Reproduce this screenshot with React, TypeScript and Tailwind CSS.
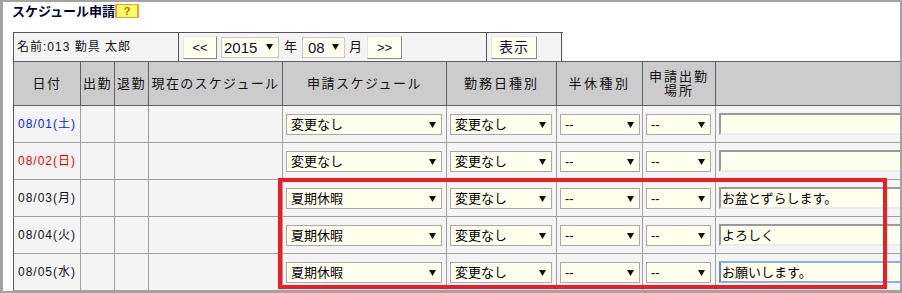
import React from "react";

function Arrow() {
  return (
    <svg width="7" height="6" viewBox="0 0 7 6" className="shrink-0">
      <polygon points="0,0 7,0 3.5,6" fill="#111" />
    </svg>
  );
}

function Sel({ w, text }: { w: string; text: string }) {
  return (
    <div
      className={`${w} inline-flex h-[21px] items-center justify-between border border-[#a9a9a9] bg-[#ffffee] pl-[4px] pr-[5px] text-[13px] leading-none text-black align-middle`}
    >
      <span className="whitespace-nowrap">{text}</span>
      <Arrow />
    </div>
  );
}

function TextBox({ text, focus }: { text: string; focus?: boolean }) {
  return (
    <div
      className={
        focus
          ? "flex h-[22px] w-[200px] items-center border-2 border-[#8fb0dd] border-l-[#6a8cc0] bg-[#ffffee] pl-[1px] text-[13px] leading-none text-black"
          : "flex h-[22px] w-[200px] items-center border-t-2 border-l-2 border-b-2 border-r-2 border-t-[#9a9a9a] border-l-[#9a9a9a] border-b-[#ececec] border-r-[#ececec] bg-[#ffffee] pl-[1px] text-[13px] leading-none text-black"
      }
    >
      <span className="whitespace-nowrap">{text}</span>
    </div>
  );
}

function Btn({ w, children }: { w: string; children: React.ReactNode }) {
  return (
    <div
      className={`${w} flex h-[23px] items-center justify-center border border-t-[#e4e4e4] border-l-[#e4e4e4] border-b-[#8a8a8a] border-r-[#8a8a8a] bg-[#ffffee] text-[13px] leading-none text-[#101040]`}
    >
      {children}
    </div>
  );
}

const rows = [
  { date: "08/01(土)", color: "text-[#0022ff]", sched: "変更なし", text: "", blank: true },
  { date: "08/02(日)", color: "text-[#ee0000]", sched: "変更なし", text: "", blank: true },
  { date: "08/03(月)", color: "text-[#111]", sched: "夏期休暇", text: "お盆とずらします。" },
  { date: "08/04(火)", color: "text-[#111]", sched: "夏期休暇", text: "よろしく" },
  { date: "08/05(水)", color: "text-[#111]", sched: "夏期休暇", text: "お願いします。", focus: true },
];

export default function App() {
  return (
    <div className="relative h-[293px] w-[902px] overflow-hidden border-t-2 border-l-[3px] border-r-2 border-b-2 border-[#a3a3a3] bg-white font-['Liberation_Sans','Noto_Sans_CJK_JP',sans-serif] text-[#111]">
      {/* title */}
      <div className="flex h-[30px] items-start pl-[9px] pt-[2px]">
        <span className="text-[13px] font-bold leading-[16px] text-[#000033]">スケジュール申請</span>
        <span className="flex h-[14px] w-[24px] items-center justify-center border-x-2 border-y border-[#ff9a2e] bg-[#ffff66] text-[11px] font-bold leading-none text-[#d06000]">
          ?
        </span>
      </div>

      {/* info bar */}
      <div className="ml-[10px] flex h-[29px] w-[550px] border-t border-l border-[#555] bg-[#f4f4f4]">
        <div className="flex w-[165px] items-center border-r border-[#555] pl-[3px] text-[12px] tracking-[1px] whitespace-nowrap">
          名前:013 勤具 太郎
        </div>
        <div className="flex w-[308px] items-center border-r border-[#555] pl-[4px]">
          <Btn w="w-[34px]">&lt;&lt;</Btn>
          <div className="ml-[4px] flex h-[21px] w-[58px] items-center justify-between border border-[#c8c8c8] bg-[#ffffee] pl-[2px] pr-[5px] text-[15px] leading-none text-[#101030]">
            <span>2015</span>
            <Arrow />
          </div>
          <span className="ml-[5px] text-[13px]">年</span>
          <div className="ml-[5px] flex h-[21px] w-[43px] items-center justify-between border border-[#c8c8c8] bg-[#ffffee] pl-[5px] pr-[5px] text-[15px] leading-none text-[#101030]">
            <span>08</span>
            <Arrow />
          </div>
          <span className="ml-[4px] text-[13px]">月</span>
          <div className="ml-[5px]">
            <Btn w="w-[35px]">&gt;&gt;</Btn>
          </div>
        </div>
        <div className="flex w-[75px] items-center border-r border-[#555] pl-[4px]">
          <Btn w="w-[46px]">
            <span className="text-[14px] tracking-[1px]">表示</span>
          </Btn>
        </div>
      </div>

      {/* main table */}
      <table className="ml-[10px] w-[902px] table-fixed border-separate border-spacing-0">
        <thead>
          <tr className="h-[45px] bg-[#cccccc] text-[13px] tracking-[1.5px]">
            <th className="w-[68px] border-t border-l border-r border-b border-[#606060] p-0 font-normal">日付</th>
            <th className="w-[34px] border-t border-r border-b border-[#606060] p-0 font-normal whitespace-nowrap">出勤</th>
            <th className="w-[34px] border-t border-r border-b border-[#606060] p-0 font-normal whitespace-nowrap">退勤</th>
            <th className="w-[134px] border-t border-r border-b border-[#606060] p-0 font-normal whitespace-nowrap tracking-[1.3px]">現在のスケジュール</th>
            <th className="w-[164px] border-t border-r border-b border-[#606060] p-0 font-normal whitespace-nowrap">申請スケジュール</th>
            <th className="w-[110px] border-t border-r border-b border-[#606060] p-0 font-normal whitespace-nowrap tracking-[2px]">勤務日種別</th>
            <th className="w-[86px] border-t border-r border-b border-[#606060] p-0 font-normal whitespace-nowrap tracking-[2.5px]">半休種別</th>
            <th className="w-[73px] border-t border-r border-b border-[#606060] p-0 font-normal leading-[14px] tracking-[2px]">
              申請出勤
              <br />
              場所
            </th>
            <th className="w-[200px] border-t border-b border-[#606060] p-0 font-normal"></th>
          </tr>
        </thead>
        <tbody>
          {rows.map((r) => (
            <tr key={r.date} className="h-[37px] bg-[#f4f4f4]">
              <td className={`border-l border-l-[#555] border-r border-b border-r-[#a0a0a0] border-b-[#a0a0a0] pl-[4px] text-[12px] tracking-[1px] whitespace-nowrap ${r.color}`}>
                {r.date}
              </td>
              <td className="border-r border-b border-[#a0a0a0]"></td>
              <td className="border-r border-b border-[#a0a0a0]"></td>
              <td className="border-r border-b border-[#a0a0a0]"></td>
              <td className="border-r border-b border-[#a0a0a0] pl-[3px] align-middle">
                <Sel w="w-[156px]" text={r.sched} />
              </td>
              <td className="border-r border-b border-[#a0a0a0] pl-[3px] align-middle">
                <Sel w="w-[102px]" text="変更なし" />
              </td>
              <td className="border-r border-b border-[#a0a0a0] pl-[3px] align-middle">
                <Sel w="w-[80px]" text="--" />
              </td>
              <td className="border-r border-b border-[#a0a0a0] pl-[3px] align-middle">
                <Sel w="w-[65px]" text="--" />
              </td>
              <td className="border-b border-[#a0a0a0] pl-[3px] align-middle">
                <TextBox text={r.text} focus={r.focus} />
              </td>
            </tr>
          ))}
        </tbody>
      </table>

      {/* highlight box */}
      <div className="pointer-events-none absolute left-[275px] top-[176px] h-[111px] w-[609px] border-4 border-[#ee1c25]"></div>
    </div>
  );
}
